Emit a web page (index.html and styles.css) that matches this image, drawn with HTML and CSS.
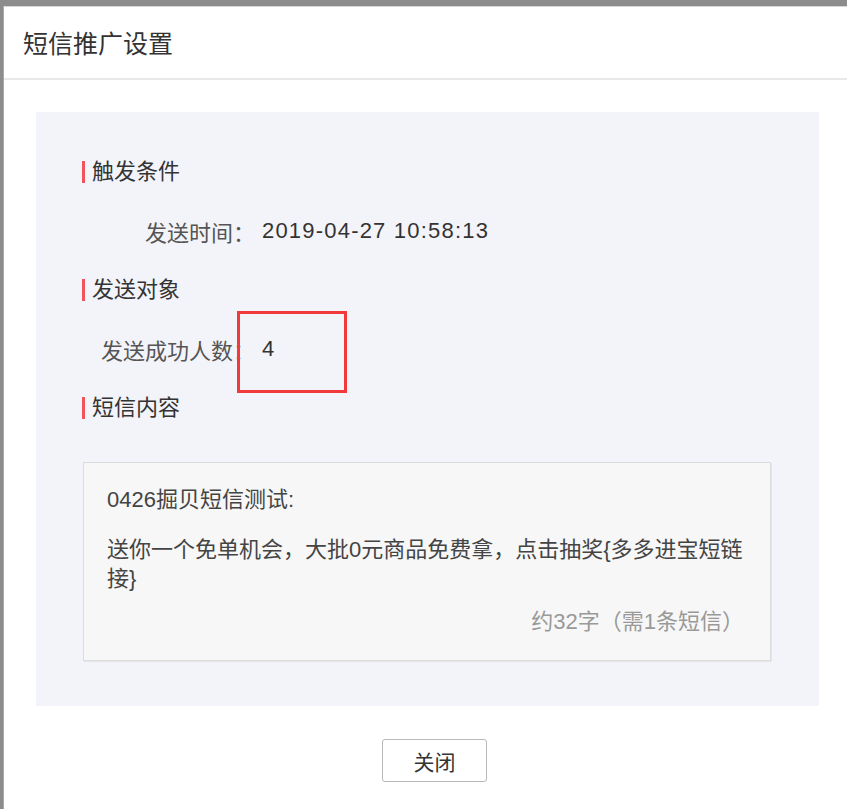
FILE: index.html
```html
<!DOCTYPE html>
<html lang="zh-CN">
<head>
<meta charset="utf-8">
<title>短信推广设置</title>
<link rel="stylesheet" href="styles.css">
</head>
<body>
<div class="dialog">
  <div class="dialog-header">短信推广设置</div>
  <div class="dialog-body">
    <div class="panel">
      <div class="row"><span class="heading">触发条件</span></div>
      <div class="row field">
        <span class="label">发送时间：</span>
        <span class="value date">2019-04-27 10:58:13</span>
      </div>
      <div class="row"><span class="heading">发送对象</span></div>
      <div class="row field">
        <span class="label">发送成功人数：</span>
        <span class="value">4</span>
      </div>
      <div class="row"><span class="heading">短信内容</span></div>
      <div class="sms-box">
        <p class="sms-title">0426掘贝短信测试:</p>
        <p class="sms-text">送你一个免单机会，大批0元商品免费拿，点击抽奖{多多进宝短链接}</p>
        <p class="sms-count">约32字（需1条短信）</p>
      </div>
    </div>
    <div class="footer">
      <button class="btn">关闭</button>
    </div>
  </div>
  <div class="highlight"></div>
</div>
</body>
</html>
```
FILE: styles.css
```css
* { box-sizing: border-box; }
html, body { margin: 0; padding: 0; }
body {
  background: #8c8c8c;
  width: 847px;
  height: 809px;
  overflow: hidden;
  font-family: "Liberation Sans", "Noto Sans CJK SC", sans-serif;
  color: #333;
}
.dialog {
  position: relative;
  margin: 6px 0 0 3px;
  height: 803px;
  background: #fff;
  border-top: 1px solid #d6d6d6;
  border-left: 1px solid #a8a8a8;
}
.dialog-header {
  height: 73px;
  border-bottom: 2px solid #e8e8e8;
  padding-left: 19px;
  font-size: 25px;
  line-height: 75px;
  color: #333;
}
.dialog-body {
  padding: 32px 28px 0 32px;
}
.panel {
  background: #f3f4f9;
  padding: 30px 48px 46px 46px;
  height: 594px;
}
.row {
  height: 59px;
  display: flex;
  align-items: center;
  font-size: 22px;
}
.heading {
  display: block;
  border-left: 3px solid #f2545b;
  padding-left: 7px;
  line-height: 22px;
  height: 22px;
  color: #333;
}
.field .label {
  width: 173px;
  text-align: right;
  color: #555;
}
.field .value {
  margin-left: 7px;
  color: #333;
}
.field .date {
  letter-spacing: 1.2px;
}
.sms-box {
  margin-top: 25px;
  margin-left: 1px;
  height: 199px;
  background: #f7f7f7;
  border: 1px solid #dcdcdc;
  box-shadow: 1px 1px 0 #e6e6e6;
  padding: 22px 22px 0 23px;
  font-size: 22px;
  line-height: 29px;
  color: #444;
}
.sms-box p { margin: 0; }
.sms-text { margin-top: 21px !important; }
.sms-count {
  margin-top: 14px !important;
  padding-right: 4px;
  text-align: right;
  color: #999;
}
.footer {
  display: flex;
  justify-content: center;
  padding: 33px 0 0 14px;
}
.btn {
  width: 105px;
  height: 43px;
  background: #fff;
  border: 1px solid #b8b8b8;
  border-radius: 3px;
  font-family: "Liberation Sans", "Noto Sans CJK SC", sans-serif;
  font-size: 21px;
  color: #333;
  padding: 0;
}
.highlight {
  position: absolute;
  left: 233px;
  top: 304px;
  width: 110px;
  height: 82px;
  border: 3px solid #f23a3a;
}
```
